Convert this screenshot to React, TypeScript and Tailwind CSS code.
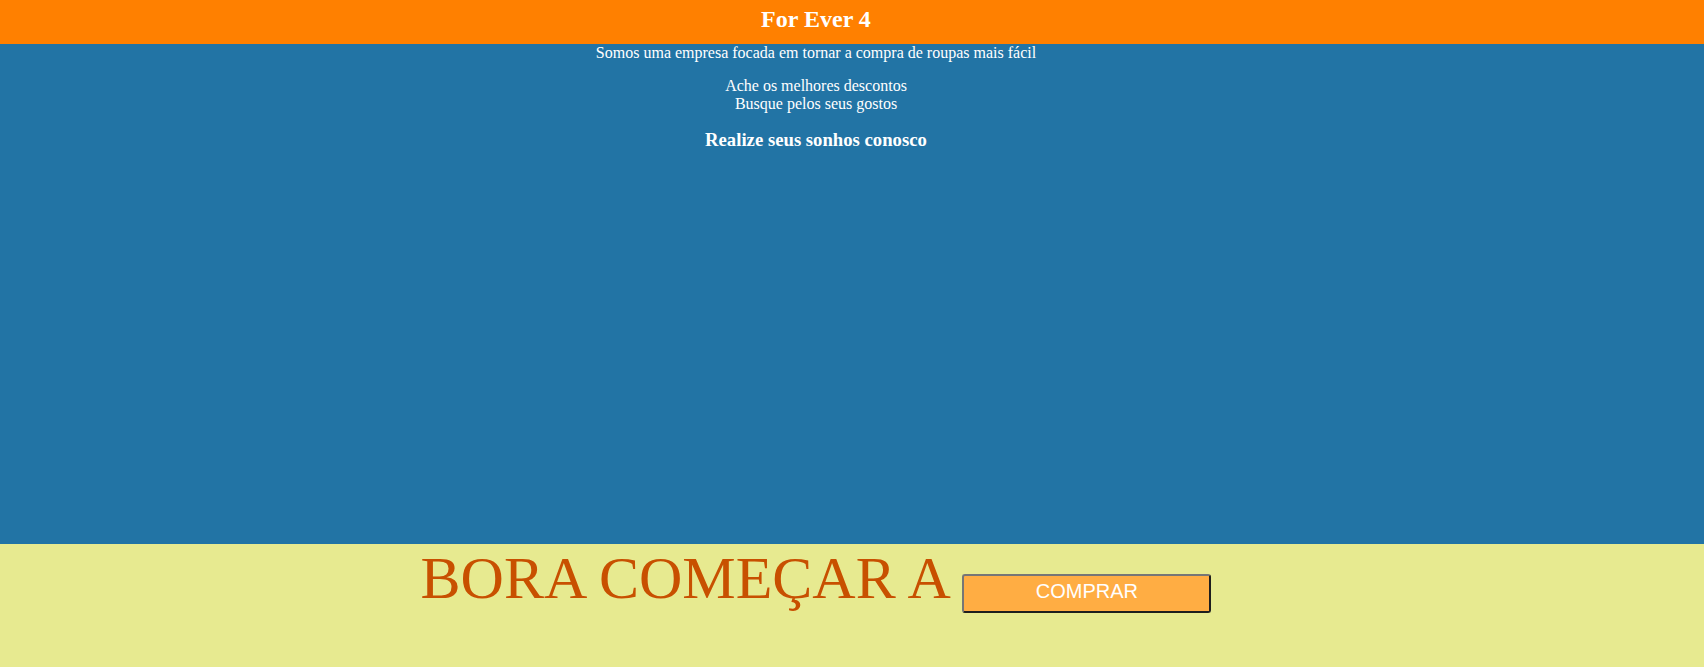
import React from 'react';

const serif = { fontFamily: '"Liberation Serif", "Times New Roman", serif' };

export default function App() {
  return (
    <div className="w-full" style={serif}>
      <header className="h-[43.5px] w-full bg-[#ff8000]">
        <div className="w-[1632px] pt-[6px] text-center">
          <h1 className="text-[24px] font-bold leading-[27.6px] text-white">For Ever 4</h1>
        </div>
      </header>

      <main className="h-[500px] w-full bg-[#2274a5]">
        <div className="w-[1632px] text-center text-white">
          <p className="text-[16px] leading-[18px]">Somos uma empresa focada em tornar a compra de roupas mais fácil</p>
          <p className="mt-[15px] text-[16px] leading-[18px]">
            Ache os melhores descontos
            <br />
            Busque pelos seus gostos
          </p>
          <h3 className="mt-[16px] text-[18.72px] font-bold leading-[22px]">Realize seus sonhos conosco</h3>
        </div>
      </main>

      <section className="h-[124px] w-full bg-[#e7ea90]">
        <div className="w-[1632px] text-center text-[60px] leading-[68px]">
          <span className="text-[#c85000]">BORA COMEÇAR A </span>
          <button
            className="inline-block w-[249px] rounded-[3px] border-2 border-t-[#767676] border-l-[#767676] border-r-[#1e1e1e] border-b-[#1e1e1e] bg-[#ffad43] pt-[4px] pb-[8px] align-baseline text-[20px] leading-[23px] text-white"
            style={{ fontFamily: '"Liberation Sans", Arial, sans-serif' }}
          >
            COMPRAR
          </button>
        </div>
      </section>
    </div>
  );
}
